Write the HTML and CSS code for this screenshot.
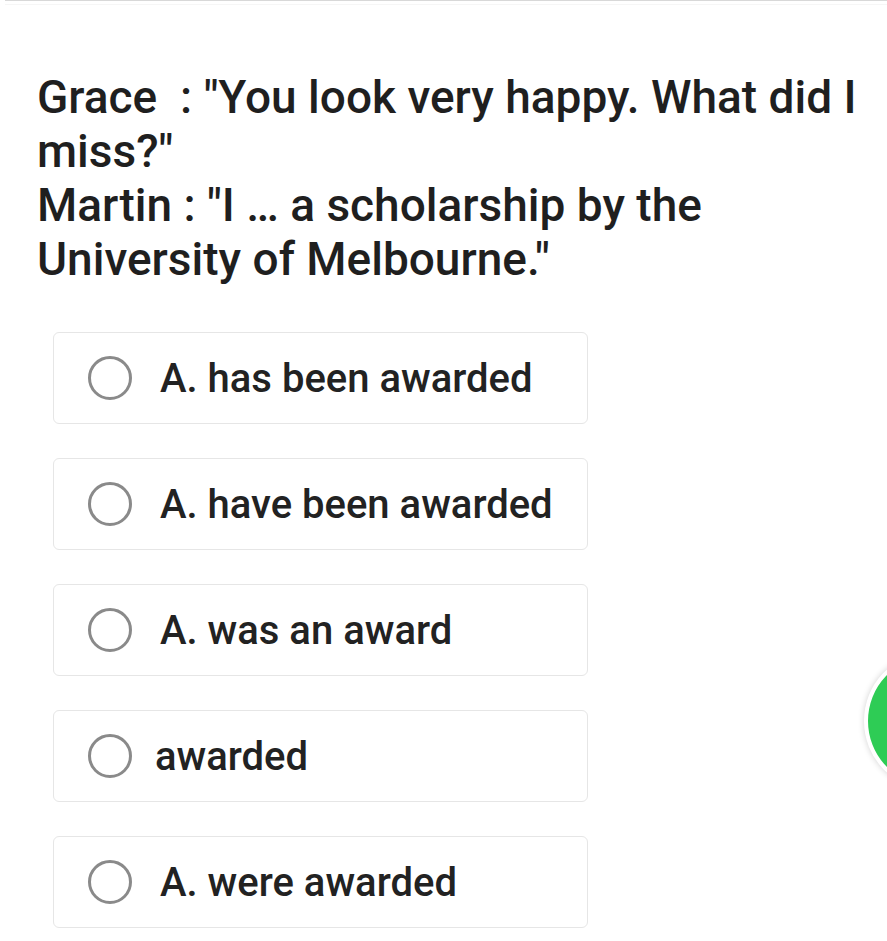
FILE: index.html
```html
<!DOCTYPE html>
<html>
<head>
<meta charset="utf-8">
<link rel="stylesheet" href="styles.css">
</head>
<body>
<div class="topbar"></div>
<div class="page">
  <div class="question">Grace&nbsp; : "You look very happy. What did I miss?"<br>Martin : "I … a scholarship by the University of Melbourne."</div>
  <div class="options">
    <div class="option"><span class="radio"></span><span class="label">A. has been awarded</span></div>
    <div class="option"><span class="radio"></span><span class="label">A. have been awarded</span></div>
    <div class="option"><span class="radio"></span><span class="label">A. was an award</span></div>
    <div class="option"><span class="radio"></span><span class="label label-tight">awarded</span></div>
    <div class="option"><span class="radio"></span><span class="label">A. were awarded</span></div>
  </div>
</div>
<div class="fab"></div>
</body>
</html>
```

FILE: styles.css
```css
html, body {
  margin: 0;
  padding: 0;
  background: #fff;
  overflow: hidden;
}
body {
  width: 887px;
  height: 941px;
  position: relative;
  font-family: Roboto, "Noto Sans", sans-serif;
  color: #1f1f1f;
}
.topbar {
  margin-left: 5px;
  height: 1px;
  background: #d8d8d8;
  box-shadow: 0 4px 0 #f6f6f6;
}
.page {
  padding: 69px 0 0 37px;
}
.question {
  font-size: 46px;
  font-weight: 500;
  line-height: 54px;
  width: 840px;
}
.options {
  margin-top: 46px;
  margin-left: 16px;
  display: flex;
  flex-direction: column;
  gap: 34px;
}
.option {
  width: 533px;
  height: 90px;
  border: 1px solid #e6e6e6;
  border-radius: 6px;
  display: flex;
  align-items: center;
}
.radio {
  width: 38px;
  height: 38px;
  border: 3px solid #8a8a8a;
  border-radius: 50%;
  margin-left: 34px;
  flex: none;
}
.label {
  margin-left: 28px;
  font-size: 40px;
  font-weight: 500;
  color: #222;
}
.label-tight {
  margin-left: 23px;
}
.fab {
  position: absolute;
  left: 864px;
  top: 654px;
  width: 120px;
  height: 126px;
  border-radius: 50%;
  background: #2ecc55;
  border: 4px solid #fff;
  box-shadow: 0 0 6px rgba(0,0,0,0.18);
}
```
